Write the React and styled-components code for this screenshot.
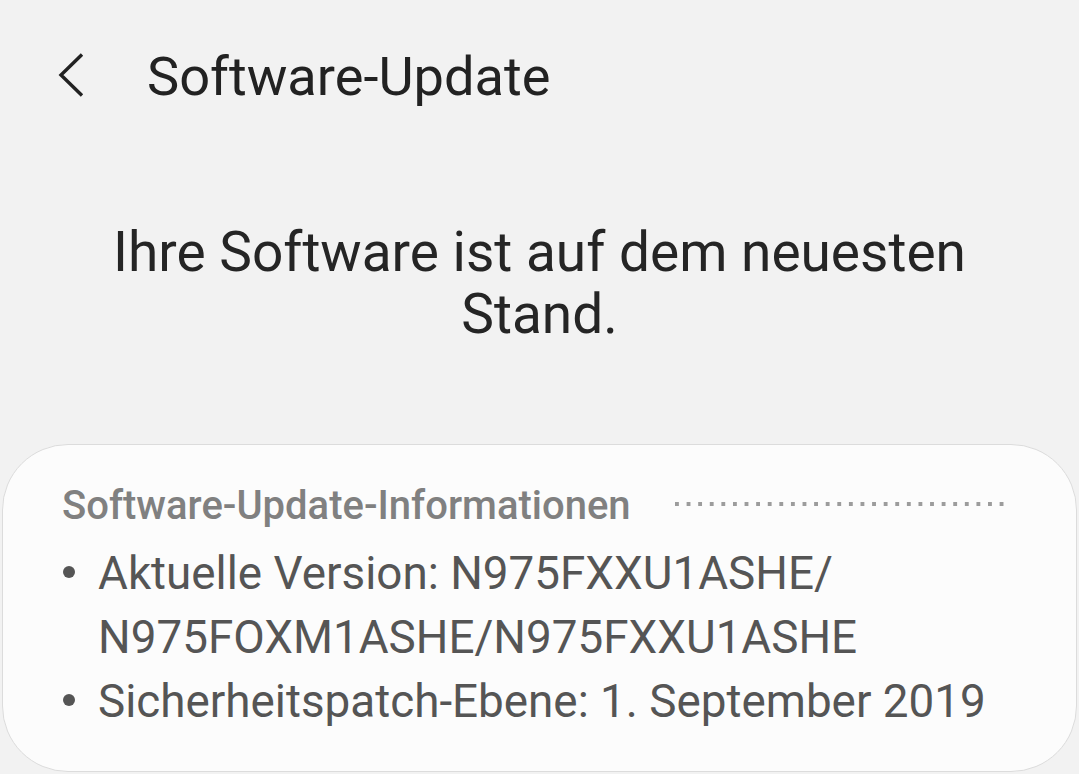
import React from "react";
import styled, { createGlobalStyle } from "styled-components";

const GlobalStyle = createGlobalStyle`
  html, body {
    margin: 0;
    padding: 0;
    background: #f2f2f2;
    font-family: Roboto, "Noto Sans", sans-serif;
  }
`;

const Screen = styled.div`
  width: 1079px;
  height: 774px;
  overflow: hidden;
  background: #f2f2f2;
  display: flex;
  flex-direction: column;

  & > * {
    flex-shrink: 0;
  }
`;

const TopBar = styled.div`
  display: flex;
  align-items: center;
  height: 152px;
  padding-left: 56px;
  gap: 61px;
  box-sizing: border-box;
`;

const BackButton = styled.button`
  border: none;
  background: none;
  padding: 0;
  width: 30px;
  height: 44px;
  display: flex;
  align-items: center;
  justify-content: center;
  margin-top: -3px;
`;

const Title = styled.h1`
  margin: 0;
  font-size: 54.2px;
  font-weight: 400;
  color: #222;
`;

const Status = styled.p`
  margin: 69px 0 0;
  text-align: center;
  font-size: 55px;
  line-height: 62px;
  color: #252525;
  padding: 0 100px;
`;

const Card = styled.section`
  margin: 99px 2px 0;
  background: #fcfcfc;
  border: 1px solid #dcdcdc;
  border-radius: 66px;
  padding: 37px 59px 37px;
`;

const CardHeader = styled.div`
  display: flex;
  align-items: center;
  gap: 44px;
`;

const CardTitle = styled.h2`
  margin: 0;
  font-size: 40px;
  font-weight: 500;
  color: #808080;
  white-space: nowrap;
`;

const Dots = styled.div`
  flex: 1;
  height: 4px;
  margin: -4px 8px 0 0;
  background-image: linear-gradient(90deg, #9c9c9c 4px, transparent 4px);
  background-size: 11.6px 4px;
  background-repeat: repeat-x;
`;

const List = styled.ul`
  list-style: none;
  margin: 13px 0 0;
  padding: 0;
`;

const Item = styled.li`
  position: relative;
  padding-left: 36px;
  font-size: 45.8px;
  line-height: 64px;
  color: #555;

  &::before {
    content: "";
    position: absolute;
    left: 1px;
    top: 24px;
    width: 12px;
    height: 12px;
    border-radius: 50%;
    background: #555;
  }
`;

export default function App() {
  return (
    <>
      <GlobalStyle />
      <Screen>
        <TopBar>
          <BackButton aria-label="Zurück">
            <svg width="30" height="44" viewBox="0 0 30 44" fill="none">
              <path d="M26 1.5 L5 22 L26 42.5" stroke="#222" strokeWidth="3.4" />
            </svg>
          </BackButton>
          <Title>Software-Update</Title>
        </TopBar>
        <Status>Ihre Software ist auf dem neuesten Stand.</Status>
        <Card>
          <CardHeader>
            <CardTitle>Software-Update-Informationen</CardTitle>
            <Dots />
          </CardHeader>
          <List>
            <Item>
              Aktuelle Version: N975FXXU1ASHE/
              <br />
              N975FOXM1ASHE/N975FXXU1ASHE
            </Item>
            <Item>Sicherheitspatch-Ebene: 1. September 2019</Item>
          </List>
        </Card>
      </Screen>
    </>
  );
}
